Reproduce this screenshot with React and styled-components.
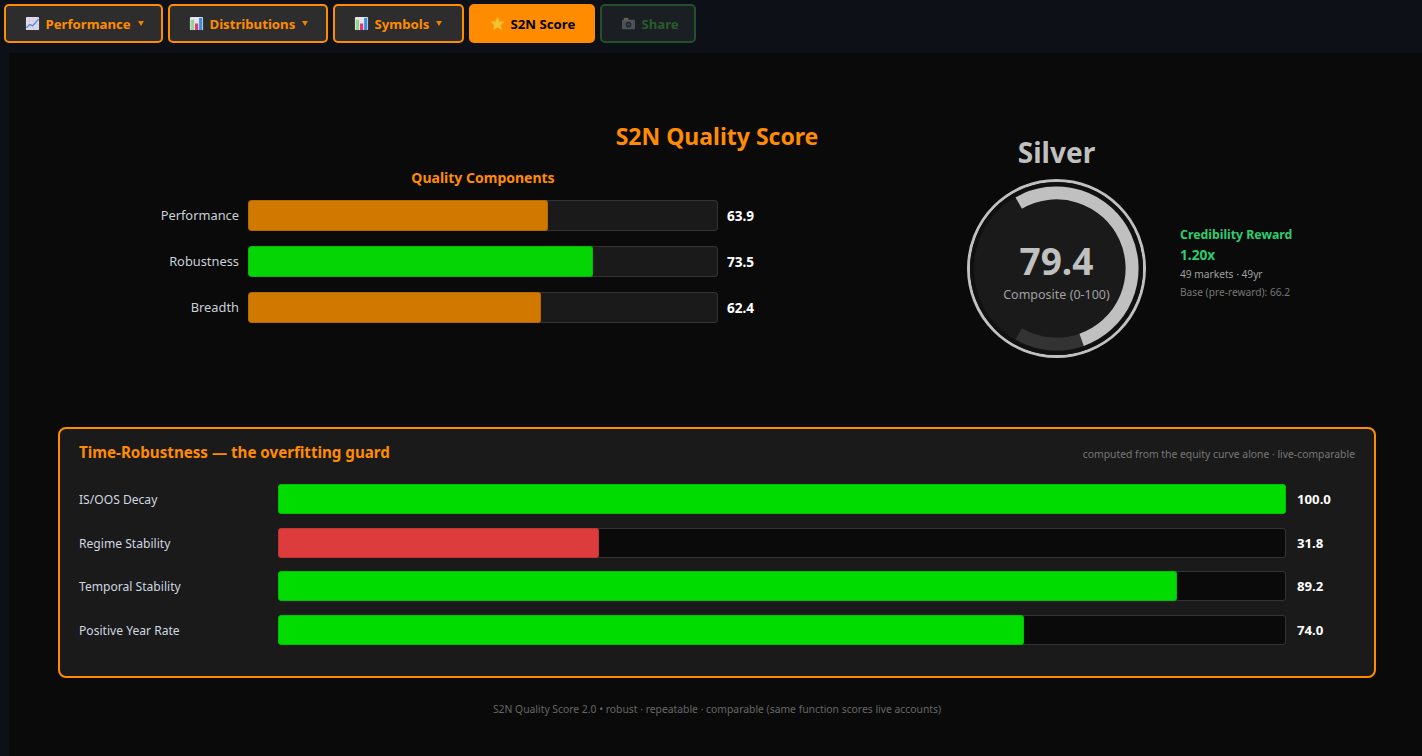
import React from "react";
import styled, { createGlobalStyle } from "styled-components";

const Global = createGlobalStyle`
  html, body { margin: 0; padding: 0; background: #0d1117; }
  body { font-family: "Noto Sans", "Open Sans", sans-serif; }
  * { box-sizing: border-box; }
`;
const Page = styled.div`width: 1422px; height: 756px; overflow: hidden; background: #0d1117; display: flex; flex-direction: column;`;
const Toolbar = styled.div`height: 53px; padding: 4px 4px 0; display: flex; gap: 5px; align-items: flex-start;`;
const Tab = styled.div`
  height: 39px; width: ${p => p.$w}px; padding-left: 18.5px; display: flex; align-items: center; gap: 6px;
  border-radius: 5px; border: 2px solid ${p => p.$disabled ? "#25502c" : "#ff8c00"};
  background: ${p => p.$active ? "#ff8c00" : p.$disabled ? "#1b1f23" : "#2d2d2d"};
  color: ${p => p.$active ? "#000" : p.$disabled ? "#2a5a30" : "#ff8c00"};
  font-size: 13.2px; font-weight: 700; white-space: nowrap;
`;
const Caret = styled.span`width: 0; height: 0; margin-left: 1px; border-left: 3px solid transparent; border-right: 3px solid transparent; border-top: 5px solid #f08000;`;
const TabIcon = styled.svg`width: 15px; height: 15px; flex: none; opacity: ${p => p.$dim ? 0.45 : 1};`;
const Content = styled.div`flex: 1; margin-left: 9px; background: #0a0a0a; display: flex; flex-direction: column; padding: 0 46px 0 49px;`;
const TopRow = styled.div`display: flex; height: 374px; padding-top: 70px;`;
const LeftCol = styled.div`width: 768px; display: flex; flex-direction: column;`;
const Title = styled.h1`margin: 0; font-size: 23px; line-height: 26px; font-weight: 700; color: #ff8c00; text-align: center; width: 1318px;`;
const CompTitle = styled.div`font-size: 14px; line-height: 20px; font-weight: 700; color: #ff8c00; margin: 19px 0 12px 0; width: 850px; text-align: center;`;
const CompRows = styled.div`display: flex; flex-direction: column; gap: 15px;`;
const CompRow = styled.div`display: flex; align-items: center; height: 31px;`;
const CompLabel = styled.div`width: 181px; margin-right: 9px; padding-bottom: 0.3px; text-align: right; font-size: 12.85px; color: #c8d0d8;`;
const CompTrack = styled.div`width: 470px; height: 31px; background: #1a1a1a; box-shadow: inset 0 0 0 1px #333; border-radius: 4px; overflow: hidden;`;
const Fill = styled.div`height: 100%; background: ${p => p.$color}; border-radius: 3px; box-shadow: inset 0 0 0 1px rgba(0, 0, 0, 0.12);`;
const CompValue = styled.div`margin-left: 9px; padding-bottom: 0.7px; font-size: 13.6px; font-weight: 700; color: #fff;`;
const RowValue = styled.div`margin-left: 11px; font-size: 13.2px; font-weight: 700; color: #fff;`;
const GaugeArea = styled.div`flex: 1; display: flex; align-items: flex-start; padding-left: 141px;`;
const GaugeCol = styled.div`width: 179px; display: flex; flex-direction: column; align-items: center; margin-top: 9px;`;
const Tier = styled.div`font-size: 28px; line-height: 40px; font-weight: 700; color: #c0c0c0; margin-bottom: 7px;`;
const Ring = styled.div`position: relative; width: 179px; height: 179px;`;
const RingText = styled.div`position: absolute; inset: 0; display: flex; flex-direction: column; align-items: center; padding-top: 57px;`;
const Score = styled.div`font-size: 37px; line-height: 50px; font-weight: 700; color: #c0c0c0;`;
const ScoreCap = styled.div`font-size: 12.5px; line-height: 18px; color: #a0a0a0;`;
const Side = styled.div`margin-left: 34px; margin-top: 103px; display: flex; flex-direction: column;`;
const Cred = styled.div`font-size: 12.3px; line-height: 18px; font-weight: 700; color: #2ecc71;`;
const Mult = styled.div`font-size: 13.7px; line-height: 21px; font-weight: 700; color: #2ecc71;`;
const Meta = styled.div`font-size: 10.2px; line-height: 18px; color: ${p => p.$c};`;
const Panel = styled.div`width: 1318px; height: 251px; background: #1a1a1a; border: 2px solid #ff8c00; border-radius: 8px; padding: 13px 19px 0; display: flex; flex-direction: column;`;
const PanelHead = styled.div`display: flex; justify-content: space-between; align-items: center; height: 20px; margin-bottom: 21.4px;`;
const PanelTitle = styled.div`font-size: 15.15px; font-weight: 700; color: #ff8c00;`;
const PanelNote = styled.div`font-size: 10.35px; color: #777; margin-top: 4px;`;
const Row = styled.div`display: flex; align-items: center; height: 31px; margin-bottom: 12.67px;`;
const RowLabel = styled.div`width: 199px; padding-top: 1px; font-size: 12.1px; color: #d0d8e0;`;
const Track = styled.div`width: 1008px; height: 30px; background: #0a0a0a; box-shadow: inset 0 0 0 1px #333; border-radius: 3px; overflow: hidden;`;
const Footer = styled.div`width: 1318px; text-align: center; font-size: 10.35px; color: #666; margin-top: 23.6px;`;

const ChartUp = () => (
  <TabIcon viewBox="0 0 16 16"><rect x="1" y="1" width="14" height="14" rx="1" fill="#e4dcee" /><path d="M1 5h14M1 9h14M1 13h14M5 1v14M9 1v14M13 1v14" stroke="#c8c0dc" strokeWidth=".5" /><path d="M1.5 12.5 5 9l3 1.5 6.5-7" fill="none" stroke="#4d8fd6" strokeWidth="1.4" /></TabIcon>
);
const ChartBars = () => (
  <TabIcon viewBox="0 0 16 16"><rect x="1" y="1" width="14" height="14" rx="1" fill="#e8e4ee" /><rect x="2" y="4" width="3.4" height="11" fill="#8fd68a" /><rect x="6.4" y="8" width="3.4" height="7" fill="#e0387e" /><rect x="10.8" y="2" width="3.4" height="13" fill="#3a8fd8" /></TabIcon>
);
const Star = () => (
  <TabIcon viewBox="0 0 16 16"><path d="M8 .8l2.2 4.8 5.2.6-3.9 3.5 1.1 5.2L8 12.3l-4.6 2.6 1.1-5.2L.6 6.2l5.2-.6z" fill="#f4c430" stroke="#e8a820" strokeWidth=".5" /></TabIcon>
);
const Camera = () => (
  <TabIcon $dim viewBox="0 0 16 16"><rect x="1" y="4" width="14" height="10" rx="1" fill="#8a8fa0" /><rect x="3" y="2" width="5" height="3" fill="#c8b070" /><circle cx="8" cy="9.2" r="3" fill="#2a2d36" /><circle cx="8" cy="9.2" r="1.5" fill="#6a6f80" /></TabIcon>
);

const comps = [["Performance", 63.9, "#d07800"], ["Robustness", 73.5, "#05d405"], ["Breadth", 62.4, "#d07800"]];
const rows = [["IS/OOS Decay", 100, "#00dc00", "100.0"], ["Regime Stability", 31.8, "#dc3c3c", "31.8"], ["Temporal Stability", 89.2, "#00dc00", "89.2"], ["Positive Year Rate", 74, "#00dc00", "74.0"]];

const polar = (r, a) => { const t = (a * Math.PI) / 180; return [90 + r * Math.sin(t), 90 - r * Math.cos(t)]; };
const arc = (r, a, b) => { const [x1, y1] = polar(r, a); const [x2, y2] = polar(r, b); return `M${x1} ${y1}A${r} ${r} 0 ${b - a > 180 ? 1 : 0} 1 ${x2} ${y2}`; };

export default function App() {
  return (
    <Page>
      <Global />
      <Toolbar>
        <Tab $w={159}><ChartUp />Performance<Caret /></Tab>
        <Tab $w={160}><ChartBars />Distributions<Caret /></Tab>
        <Tab $w={131}><ChartBars />Symbols<Caret /></Tab>
        <Tab $w={126} $active><Star />S2N Score</Tab>
        <Tab $w={96} $disabled><Camera />Share</Tab>
      </Toolbar>
      <Content>
        <TopRow>
          <LeftCol>
            <Title>S2N Quality Score</Title>
            <CompTitle>Quality Components</CompTitle>
            <CompRows>
              {comps.map(([n, v, c]) => (
                <CompRow key={n}>
                  <CompLabel>{n}</CompLabel>
                  <CompTrack><Fill $color={c} style={{ width: `${v}%` }} /></CompTrack>
                  <CompValue>{v.toFixed(1)}</CompValue>
                </CompRow>
              ))}
            </CompRows>
          </LeftCol>
          <GaugeArea>
            <GaugeCol>
              <Tier>Silver</Tier>
              <Ring>
                <svg width="179" height="179" viewBox="0 0 180 180">
                  <circle cx="90" cy="90" r="88.5" fill="#1a1a1a" stroke="#c0c0c0" strokeWidth="3" />
                  <circle cx="90" cy="90" r="85" fill="none" stroke="#101010" strokeWidth="4" />
                  <path d={arc(76, 160.6, 210)} fill="none" stroke="#333" strokeWidth="13" />
                  <path d={arc(76, -30, 160.6)} fill="none" stroke="#c0c0c0" strokeWidth="13" />
                </svg>
                <RingText>
                  <Score>79.4</Score>
                  <ScoreCap>Composite (0-100)</ScoreCap>
                </RingText>
              </Ring>
            </GaugeCol>
            <Side>
              <Cred>Credibility Reward</Cred>
              <Mult>1.20x</Mult>
              <Meta $c="#a0a0a0">49 markets · 49yr</Meta>
              <Meta $c="#777">Base (pre-reward): 66.2</Meta>
            </Side>
          </GaugeArea>
        </TopRow>
        <Panel>
          <PanelHead>
            <PanelTitle>Time-Robustness — the overfitting guard</PanelTitle>
            <PanelNote>computed from the equity curve alone · live-comparable</PanelNote>
          </PanelHead>
          {rows.map(([n, v, c, t]) => (
            <Row key={n}>
              <RowLabel>{n}</RowLabel>
              <Track><Fill $color={c} style={{ width: `${v}%` }} /></Track>
              <RowValue>{t}</RowValue>
            </Row>
          ))}
        </Panel>
        <Footer>S2N Quality Score 2.0 • robust · repeatable · comparable (same function scores live accounts)</Footer>
      </Content>
    </Page>
  );
}
